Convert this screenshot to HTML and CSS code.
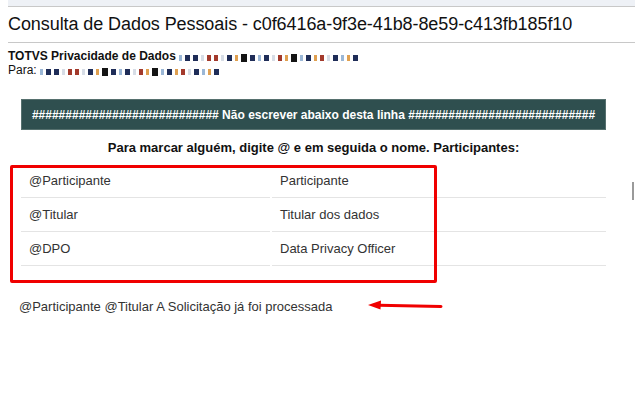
FILE: index.html
```html
<!DOCTYPE html>
<html lang="pt">
<head>
<meta charset="utf-8">
<title>Consulta de Dados Pessoais</title>
<link rel="stylesheet" href="styles.css">
</head>
<body>
<div class="topbar"></div>
<h1 class="title">Consulta de Dados Pessoais - c0f6416a-9f3e-41b8-8e59-c413fb185f10</h1>
<div class="meta">
  <div class="meta-line"><b>TOTVS Privacidade de Dados</b> <span class="blur"><i class="p l"></i><i class="p n"></i><i class="p n"></i><i class="p w"></i><i class="p r"></i><i class="p r"></i><i class="p w"></i><i class="p n"></i><i class="p o"></i><i class="p k"></i><i class="p n"></i><i class="p l"></i><i class="p n"></i><i class="p w"></i><i class="p r"></i><i class="p o"></i><i class="p k"></i><i class="p l"></i><i class="p n"></i><i class="p o"></i><i class="p r"></i><i class="p w"></i><i class="p n"></i><i class="p l"></i><i class="p o"></i><i class="p n"></i></span></div>
  <div class="meta-line">Para: <span class="blur"><i class="p l"></i><i class="p n"></i><i class="p n"></i><i class="p w"></i><i class="p r"></i><i class="p r"></i><i class="p w"></i><i class="p n"></i><i class="p o"></i><i class="p k"></i><i class="p n"></i><i class="p l"></i><i class="p n"></i><i class="p w"></i><i class="p r"></i><i class="p o"></i><i class="p k"></i><i class="p l"></i><i class="p n"></i><i class="p o"></i><i class="p r"></i><i class="p w"></i><i class="p n"></i><i class="p l"></i><i class="p o"></i><i class="p n"></i></span></div>
</div>
<div class="content">
  <div class="banner">############################ Não escrever abaixo desta linha ############################</div>
  <p class="hint">Para marcar alguém, digite @ e em seguida o nome. Participantes:</p>
  <div class="table">
    <div class="cell">@Participante</div><div class="cell">Participante</div>
    <div class="cell">@Titular</div><div class="cell">Titular dos dados</div>
    <div class="cell">@DPO</div><div class="cell">Data Privacy Officer</div>
  </div>
</div>
<p class="reply">@Participante @Titular A Solicitação já foi processada</p>

<div class="mark-box"></div>
<svg class="mark-arrow" width="80" height="14" viewBox="0 0 80 14"><path d="M12 6.2 L74 7.4" stroke="#f00000" stroke-width="3" stroke-linecap="round" fill="none"/><path d="M1 6 L14 1.5 L13.5 10.5 Z" fill="#f00000"/></svg>
<div class="scroll-mark"></div>
</body>
</html>
```
FILE: styles.css
```css
html, body {
  margin: 0;
  padding: 0;
  background: #ffffff;
}
body {
  font-family: "Liberation Sans", Arial, sans-serif;
  color: #222;
  position: relative;
  min-height: 413px;
}
.topbar {
  height: 6px;
  background: #eef1f6;
  border-bottom: 1px solid #c8c8c8;
  margin-left: 8px;
}
.title {
  margin: 0 0 0 8px;
  padding: 7px 0;
  font-size: 18px;
  line-height: 21px;
  font-weight: normal;
  letter-spacing: -0.08px;
  color: #111;
  border-bottom: 1px solid #c8c8c8;
}
.meta {
  padding: 6px 8px 0;
  font-size: 12px;
  line-height: 14px;
  color: #111;
}
.blur {
  display: inline-flex;
  align-items: center;
  gap: 3px;
  vertical-align: -1px;
}
.p {
  display: inline-block;
  width: 4px;
  height: 6px;
}
.p.n { background: #1f2d58; width: 5px; }
.p.l { background: #9bb7d6; width: 3px; }
.p.r { background: #a33a2c; }
.p.o { background: #e0a050; width: 3px; }
.p.k { background: #141414; width: 6px; height: 8px; }
.p.w { background: #d7dde6; width: 3px; }
.content {
  margin: 22px 0 0 21px;
  width: 585px;
}
.banner {
  height: 31px;
  box-sizing: border-box;
  background: #2f4f4f;
  border: 1px solid #56706e;
  color: #ffffff;
  font-weight: bold;
  font-size: 12px;
  display: flex;
  align-items: center;
  justify-content: center;
  white-space: nowrap;
  overflow: hidden;
}
.hint {
  margin: 10px 0 8px;
  text-align: center;
  font-weight: bold;
  font-size: 13px;
  line-height: 16px;
  color: #111;
}
.table {
  display: grid;
  grid-template-columns: 249px 1fr;
  column-gap: 2px;
}
.cell {
  padding: 8px;
  font-size: 13px;
  line-height: 17px;
  color: #333;
  border-bottom: 1px solid #e4e4e4;
}
.reply {
  margin: 32px 0 0 19px;
  font-size: 13px;
  line-height: 17px;
  color: #333;
}
.mark-box {
  position: absolute;
  left: 10px;
  top: 165px;
  width: 427px;
  height: 118px;
  box-sizing: border-box;
  border: 3px solid #f00000;
  border-radius: 2px;
}
.mark-arrow {
  position: absolute;
  left: 367px;
  top: 299px;
}
.scroll-mark {
  position: absolute;
  left: 632px;
  top: 182px;
  width: 2px;
  height: 18px;
  background: #9a9a9a;
}
```
